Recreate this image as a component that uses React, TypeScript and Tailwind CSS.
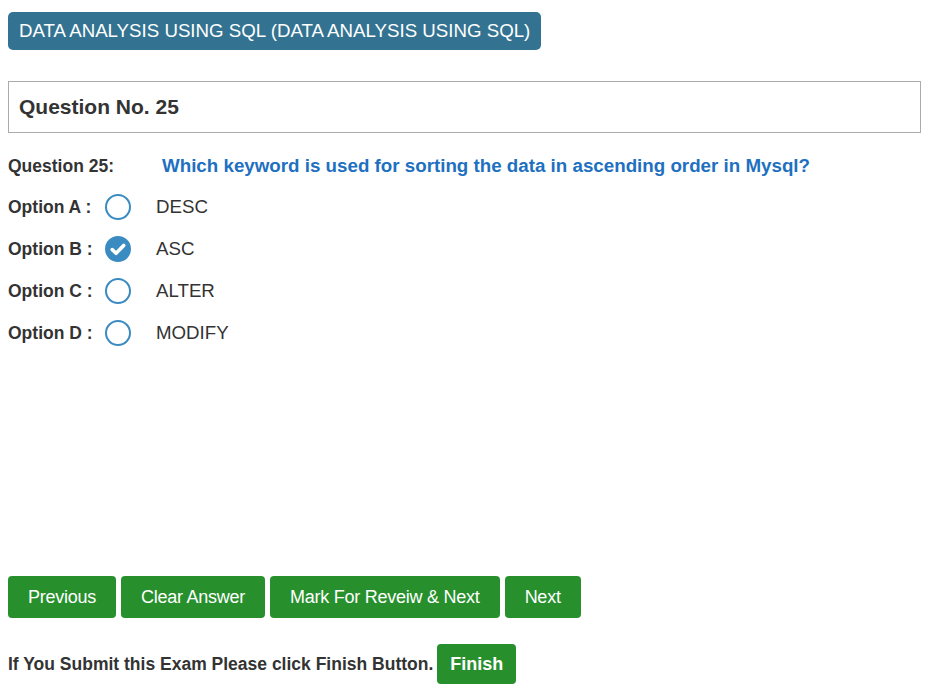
import { useState } from "react";

const options = [
  { key: "A", text: "DESC" },
  { key: "B", text: "ASC" },
  { key: "C", text: "ALTER" },
  { key: "D", text: "MODIFY" },
];

function Radio({ checked }: { checked: boolean }) {
  if (checked) {
    return (
      <svg width="26" height="26" viewBox="0 0 26 26" className="block">
        <circle cx="13" cy="13" r="13" fill="#3a8bc1" />
        <path d="M7.2 13.6l3.9 3.7 7.6-7.9" fill="none" stroke="#fff" strokeWidth="3.6" strokeLinecap="round" strokeLinejoin="round" />
      </svg>
    );
  }
  return (
    <svg width="26" height="26" viewBox="0 0 26 26" className="block">
      <circle cx="13" cy="13" r="12" fill="#fff" stroke="#3a8bc1" strokeWidth="2" />
    </svg>
  );
}

export default function App() {
  const [answer, setAnswer] = useState("B");

  return (
    <div className="min-h-screen bg-white px-2 pt-3 text-[#333] font-['Liberation_Sans',Arial,sans-serif]">
      <div className="inline-block rounded-[5px] bg-[#337391] px-[11px] py-[7px] text-[18.7px] leading-6 text-white">
        DATA ANALYSIS USING SQL (DATA ANALYSIS USING SQL)
      </div>

      <div className="mt-[31px] mr-[17px] border border-[#ababab] px-[10px] py-[13px]">
        <h2 className="text-[21px] font-bold leading-6 text-[#333]">Question No. 25</h2>
      </div>

      <div className="mt-[19px] flex items-center">
        <span className="w-[154px] text-[17.5px] font-bold">Question 25:</span>
        <span className="text-[18.75px] font-bold text-[#1e70c1]">
          Which keyword is used for sorting the data in ascending order in Mysql?
        </span>
      </div>

      <div className="mt-[14px] flex flex-col gap-4">
        {options.map((o) => (
          <label key={o.key} className="flex h-[26px] cursor-pointer items-center" onClick={() => setAnswer(o.key)}>
            <span className="w-[97px] text-[17.5px] font-bold">Option {o.key} :</span>
            <Radio checked={answer === o.key} />
            <span className="ml-[25px] text-[18.7px] text-[#333]">{o.text}</span>
          </label>
        ))}
      </div>

      <div className="mt-[230px] flex gap-[5px]">
        {["Previous", "Clear Answer", "Mark For Reveiw & Next", "Next"].map((b) => (
          <button key={b} className="h-[42px] rounded-[4px] bg-[#27902d] px-5 text-[18px] text-white tracking-[-0.25px]">
            {b}
          </button>
        ))}
      </div>

      <div className="mt-[26px] flex items-center gap-1">
        <span className="text-[17.5px] font-bold">If You Submit this Exam Please click Finish Button.</span>
        <button className="h-[40px] rounded-[4px] bg-[#27902d] px-[13px] text-[18px] font-bold text-white">Finish</button>
      </div>
    </div>
  );
}
